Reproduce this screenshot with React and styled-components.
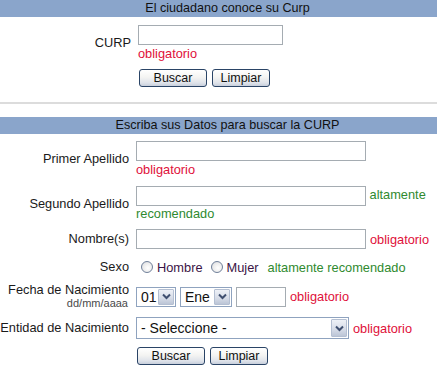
import React from 'react';
import styled, { createGlobalStyle } from 'styled-components';

const Global = createGlobalStyle`
  html, body {
    margin: 0;
    padding: 0;
    background: #ffffff;
    overflow: hidden;
  }
  body {
    font-family: "Liberation Sans", Arial, sans-serif;
    font-size: 12.8px;
    color: #1a1a1a;
  }
`

// page frame is wider than the window, the right edge gets cut like in the capture
const Page = styled.div`
  width: 455px;
`
const Header = styled.div`
  height: 17px;
  line-height: 17px;
  background-color: #8aa5cb;
  color: #111111;
  text-align: center;
  font-size: 12.6px;
`
const Body = styled.div`
  padding-top: ${p => p.$top}px;
`
const Row = styled.div`
  display: grid;
  grid-template-columns: ${p => p.$label}px 1fr;
  column-gap: 7px;
  align-items: center;
  margin-top: ${p => p.$mt || 0}px;
`
const Label = styled.div`
  text-align: right;
  line-height: 14px;
  color: #1a1a1a;
`
const SubLabel = styled.div`
  font-size: 11px;
  line-height: 13px;
  color: #4a4a4a;
  margin-right: 1px;
`
const Field = styled.div`
  line-height: 15px;
  display: ${p => (p.$inline ? 'flex' : 'block')};
  align-items: center;
  gap: 4px;
`
const TextInput = styled.input`
  box-sizing: border-box;
  width: ${p => p.$w}px;
  height: 20px;
  border: 1px solid #a5acb2;
  background: #ffffff;
  padding: 0 3px;
  margin: 0;
  font: inherit;
  display: ${p => (p.$block ? 'block' : 'inline-block')};
  vertical-align: middle;
`
const Hint = styled.span`
  color: ${p => (p.$tone === 'rec' ? '#2f8a2f' : '#e0103a')};
  margin-left: ${p => p.$ml || 0}px;
  ${p => p.$block && `
    display: block;
    margin-top: 2px;
    line-height: 14px;
  `}
`
const Buttons = styled.div`
  display: flex;
  gap: 5px;
  padding-left: ${p => p.$shift || 0}px;
`
const Button = styled.button`
  box-sizing: border-box;
  width: ${p => p.$w}px;
  height: 18px;
  padding: 0;
  border: 1px solid #2a4466;
  border-radius: 3px;
  background: linear-gradient(#ffffff 0%, #f4f4f2 45%, #dfe3ea 80%, #c8cfdc 100%);
  font-family: "Liberation Sans", Arial, sans-serif;
  font-size: 12.5px;
  color: #111111;
  cursor: pointer;
`
const Divider = styled.div`
  height: 2px;
  background-color: #dcdcdc;
  margin: 15px 0 13px;
`
const RadioGroup = styled.div`
  display: flex;
  align-items: center;
  height: 16px;
`
const RadioDot = styled.span`
  box-sizing: border-box;
  width: 12px;
  height: 12px;
  border-radius: 50%;
  border: 1px solid #6f7f99;
  background: radial-gradient(circle at 60% 60%, #ffffff 0%, #ececec 55%, #cfd3da 100%);
  margin: 0 4px 0 ${p => p.$ml}px;
`
const RadioText = styled.span`
  color: #3b1446;
`
const SelectBox = styled.div`
  box-sizing: border-box;
  width: ${p => p.$w}px;
  height: ${p => p.$h || 20}px;
  border: 1px solid #8fa3bf;
  background: #ffffff;
  display: flex;
  align-items: stretch;
  padding: 1px;
  font-size: 14px;
  color: #111111;
`
const SelectValue = styled.span`
  flex: 1;
  display: flex;
  align-items: center;
  padding-left: 3px;
  white-space: nowrap;
  overflow: hidden;
`
const SelectArrow = styled.span`
  box-sizing: border-box;
  width: 16px;
  border: 1px solid #b4bfd2;
  border-radius: 1px;
  background: linear-gradient(#eef1f7 0%, #d5dbe7 60%, #bcc5d6 100%);
  display: flex;
  align-items: center;
  justify-content: center;
`
const DateRow = styled.div`
  display: flex;
  align-items: center;
  gap: 4px;
`

const Chevron = () => (
  <svg width="9" height="7" viewBox="0 0 9 7">
    <path d="M1 1.5 L4.5 5 L8 1.5" fill="none" stroke="#3f4f70" strokeWidth="2" />
  </svg>
)

const FakeSelect = ({ value, w, h }) => (
  <SelectBox $w={w} $h={h}>
    <SelectValue>{value}</SelectValue>
    <SelectArrow><Chevron /></SelectArrow>
  </SelectBox>
)

const App = () => {
  return (
    <Page>
      <Global />
      <Header>El ciudadano conoce su Curp</Header>
      <Body $top={8}>
        <Row $label={131}>
          <Label>CURP</Label>
          <Field>
            <TextInput $w={145} $block />
            <Hint $block>obligatorio</Hint>
          </Field>
        </Row>
        <Row $label={131} $mt={8}>
          <span />
          <Buttons $shift={1}>
            <Button $w={68}>Buscar</Button>
            <Button $w={58}>Limpiar</Button>
          </Buttons>
        </Row>
      </Body>
      <Divider />
      <Header>Escriba sus Datos para buscar la CURP</Header>
      <Body $top={7}>
        <Row $label={129}>
          <Label>Primer Apellido</Label>
          <Field>
            <TextInput $w={230} $block />
            <Hint $block>obligatorio</Hint>
          </Field>
        </Row>
        <Row $label={129} $mt={9}>
          <Label>Segundo Apellido</Label>
          <Field>
            <TextInput $w={230} /> <Hint $tone="rec">altamente recomendado</Hint>
          </Field>
        </Row>
        <Row $label={129} $mt={8}>
          <Label>Nombre(s)</Label>
          <Field $inline>
            <TextInput $w={230} />
            <Hint>obligatorio</Hint>
          </Field>
        </Row>
        <Row $label={129} $mt={10}>
          <Label>Sexo</Label>
          <RadioGroup>
            <RadioDot $ml={5} />
            <RadioText>Hombre</RadioText>
            <RadioDot $ml={8} />
            <RadioText>Mujer</RadioText>
            <Hint $tone="rec" $ml={9}>altamente recomendado</Hint>
          </RadioGroup>
        </Row>
        <Row $label={129} $mt={8}>
          <Label>
            Fecha de Nacimiento
            <SubLabel>dd/mm/aaaa</SubLabel>
          </Label>
          <DateRow>
            <FakeSelect value="01" w={40} />
            <FakeSelect value="Ene" w={52} />
            <TextInput $w={50} />
            <Hint>obligatorio</Hint>
          </DateRow>
        </Row>
        <Row $label={129} $mt={7}>
          <Label>Entidad de Nacimiento</Label>
          <DateRow>
            <FakeSelect value="- Seleccione -" w={213} h={22} />
            <Hint>obligatorio</Hint>
          </DateRow>
        </Row>
        <Row $label={129} $mt={8}>
          <span />
          <Buttons $shift={1}>
            <Button $w={68}>Buscar</Button>
            <Button $w={58}>Limpiar</Button>
          </Buttons>
        </Row>
      </Body>
    </Page>
  )
}
export default App;
